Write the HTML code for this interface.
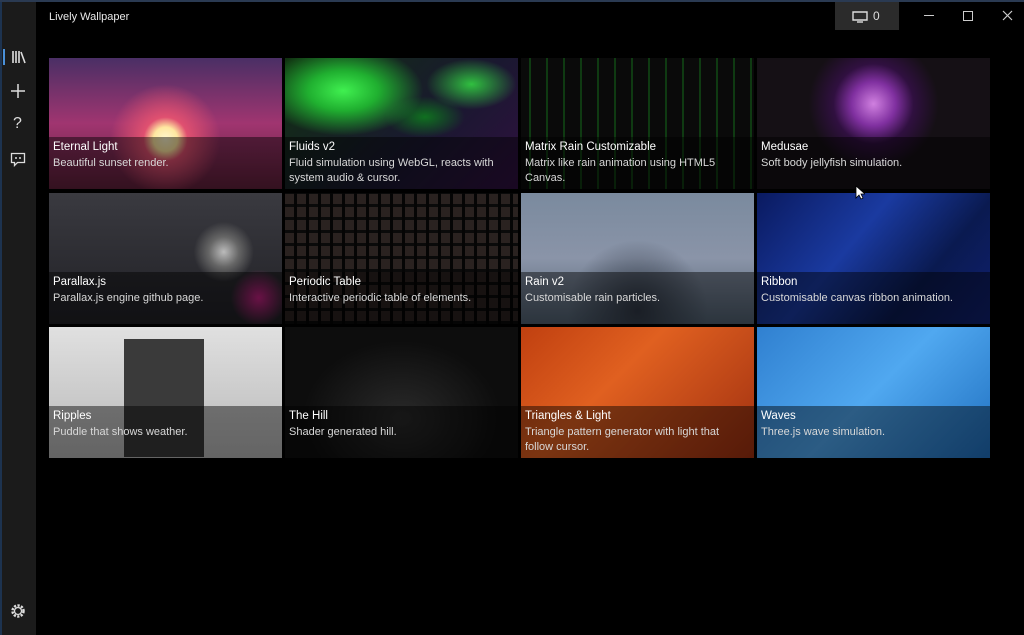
<!DOCTYPE html>
<html><head><meta charset="utf-8"><style>
*{margin:0;padding:0;box-sizing:border-box}
body{width:1024px;height:635px;background:#000;overflow:hidden;position:relative;font-family:"Segoe UI","Liberation Sans",sans-serif;color:#fff}
.topline{position:absolute;left:0;top:0;width:1024px;height:2px;background:#2a3a52}
.side{position:absolute;left:0;top:2px;width:36px;height:633px;background:#1b1b1b;border-left:2px solid #1d3350}
.title{position:absolute;left:49px;top:11px;font-size:11px;color:#e8e8e8}
.mon{position:absolute;left:835px;top:2px;width:64px;height:28px;background:#2b2b2b}
.ic{position:absolute;color:#ddd}
.tile{position:absolute;width:233px;height:131px;overflow:hidden}
.cap{position:absolute;left:0;right:0;top:79px;bottom:0;background:rgba(0,0,0,0.45);padding:3px 4px}
.cap b{display:block;font-weight:normal;font-size:11.5px;color:#fff;line-height:14px}
.cap span{display:block;font-size:11px;color:#d8d8d8;line-height:15px;margin-top:2px;padding-right:8px}
</style></head><body>
<div class="topline"></div>
<div class="side"></div>
<div style="position:absolute;left:3px;top:49px;width:2px;height:16px;background:#4a90d9"></div>
<svg class="ic" style="left:11px;top:50px" width="15" height="14" viewBox="0 0 15 14"><g stroke="#ddd" stroke-width="1.6" fill="none"><path d="M2 1v12M5 1v12M8 1v12M10 2l4 11"/></g></svg>
<svg class="ic" style="left:10px;top:83px" width="16" height="16"><path d="M8 1v14M1 8h14" stroke="#ddd" stroke-width="1.5"/></svg>
<div class="ic" style="left:13px;top:115px;font-size:16px">?</div>
<svg class="ic" style="left:10px;top:152px" width="16" height="15"><path d="M1.5 1.5h13v9h-7l-3 3v-3h-3z" stroke="#ddd" stroke-width="1.3" fill="none"/><path d="M6 5v2M10 5v2" stroke="#ddd" stroke-width="1.5"/></svg>
<svg class="ic" style="left:10px;top:603px" width="16" height="16" viewBox="0 0 16 16"><circle cx="8" cy="8" r="5.5" stroke="#ddd" stroke-width="2.5" stroke-dasharray="2.2 1.4" fill="none"/><circle cx="8" cy="8" r="3.5" stroke="#ddd" stroke-width="1.3" fill="none"/></svg>
<div class="title">Lively Wallpaper</div>
<div class="mon"><svg style="position:absolute;left:17px;top:9px" width="16" height="12"><path d="M1 1h14v8H1z" stroke="#ddd" stroke-width="1.4" fill="none"/><path d="M5 11h6" stroke="#ddd" stroke-width="1.4"/></svg><span style="position:absolute;left:38px;top:7px;font-size:12px;color:#ddd">0</span></div>
<div class="ic" style="left:924px;top:15px;width:10px;height:1px;background:#ccc"></div>
<div class="ic" style="left:963px;top:11px;width:10px;height:10px;border:1px solid #ccc"></div>
<svg class="ic" style="left:1002px;top:10px" width="11" height="11"><path d="M1 1l9 9M10 1l-9 9" stroke="#ccc" stroke-width="1.2"/></svg>

<div class="tile" style="left:49px;top:58px;background:radial-gradient(circle at 50% 62%,#fff8d0 0,#ffe8a0 12px,#e05070 22px,transparent 55px),linear-gradient(#4a2f65,#a03570 50%,#60203a)"><div class="cap"><b>Eternal Light</b><span>Beautiful sunset render.</span></div></div>
<div class="tile" style="left:285px;top:58px;background:radial-gradient(ellipse at 25% 25%,#40f050 0,#20b030 35px,transparent 80px),radial-gradient(ellipse at 80% 20%,#30c040 0,transparent 45px),radial-gradient(ellipse at 60% 45%,#107020 0,transparent 40px),linear-gradient(135deg,#103010,#1a1830 60%,#301040)"><div class="cap"><b>Fluids v2</b><span>Fluid simulation using WebGL, reacts with system audio &amp; cursor.</span></div></div>
<div class="tile" style="left:521px;top:58px;background:repeating-linear-gradient(90deg,#0a0a0a 0,#0a0a0a 8px,#0f3a12 8px,#0f3a12 10px,#0a0a0a 10px,#0a0a0a 17px)"><div class="cap"><b>Matrix Rain Customizable</b><span>Matrix like rain animation using HTML5 Canvas.</span></div></div>
<div class="tile" style="left:757px;top:58px;background:radial-gradient(circle at 50% 35%,#d080e0 0,#8030a0 22px,#301040 40px,#151015 65px)"><div class="cap"><b>Medusae</b><span>Soft body jellyfish simulation.</span></div></div>

<div class="tile" style="left:49px;top:193px;background:radial-gradient(circle at 75% 45%,#bbb 0,#666 15px,transparent 30px),radial-gradient(circle at 90% 80%,#c02080,transparent 28px),linear-gradient(#3a3a40,#202025)"><div class="cap"><b>Parallax.js</b><span>Parallax.js engine github page.</span></div></div>
<div class="tile" style="left:285px;top:193px;background:repeating-linear-gradient(90deg,transparent 0,transparent 9px,#050505 9px,#050505 12px),repeating-linear-gradient(0deg,#0a0a0a 0,#0a0a0a 3px,#2a2220 3px,#2a2220 13px)"><div class="cap"><b>Periodic Table</b><span>Interactive periodic table of elements.</span></div></div>
<div class="tile" style="left:521px;top:193px;background:radial-gradient(ellipse at 50% 90%,#303845,transparent 70px),linear-gradient(#7a8a9e,#8a94a8 50%,#506070)"><div class="cap"><b>Rain v2</b><span>Customisable rain particles.</span></div></div>
<div class="tile" style="left:757px;top:193px;background:linear-gradient(130deg,#0a1a60,#1a3aa0 40%,#0a1a50 70%,#102070)"><div class="cap"><b>Ribbon</b><span>Customisable canvas ribbon animation.</span></div></div>

<div class="tile" style="left:49px;top:327px;background:linear-gradient(#e0e0e0,#b8b8b8)"><div style="position:absolute;left:75px;top:12px;width:80px;height:118px;background:#3a3a3a"></div><div class="cap"><b>Ripples</b><span>Puddle that shows weather.</span></div></div>
<div class="tile" style="left:285px;top:327px;background:radial-gradient(ellipse at 50% 70%,#2a2a2a,#0d0d0d 60%)"><div class="cap"><b>The Hill</b><span>Shader generated hill.</span></div></div>
<div class="tile" style="left:521px;top:327px;background:linear-gradient(135deg,#c04010,#e06020 40%,#a03010)"><div class="cap"><b>Triangles &amp; Light</b><span>Triangle pattern generator with light that follow cursor.</span></div></div>
<div class="tile" style="left:757px;top:327px;background:linear-gradient(135deg,#3080d0,#50a8f0 50%,#2070c0)"><div class="cap"><b>Waves</b><span>Three.js wave simulation.</span></div></div>
<svg style="position:absolute;left:855px;top:185px" width="10" height="15"><path d="M1 1v12l3-3 2 4 2-1-2-4h4z" fill="#fff" stroke="#000" stroke-width=".8"/></svg>
</body></html>
